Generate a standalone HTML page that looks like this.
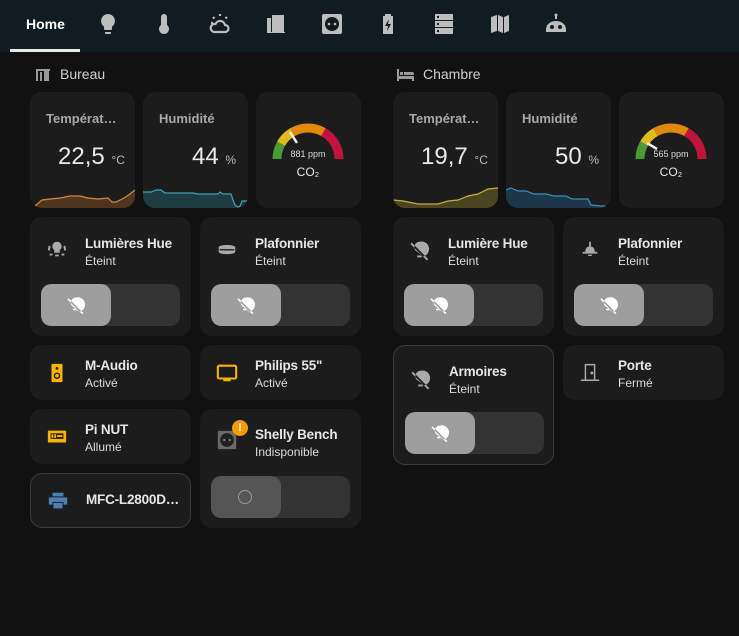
<!DOCTYPE html><html><head><meta charset="utf-8"><style>
*{box-sizing:border-box;margin:0;padding:0}
body{width:739px;height:636px;background:#111;font-family:"Liberation Sans",sans-serif;position:relative;overflow:hidden;color:#e1e1e1}
.hdr{position:absolute;left:0;top:0;width:739px;height:52px;background:#111c22}
.tab{position:absolute;top:16px;left:26px;font-size:14px;font-weight:bold;color:#fff}
.ul{position:absolute;left:10px;top:49px;width:70px;height:3px;background:#e8e8e8}
.ic{position:absolute;top:12px;width:24px;height:24px}
.card{position:absolute;background:#1c1c1c;border-radius:12px;overflow:hidden}
.bd{border:1px solid #3a3a3a}
.sec{position:absolute;top:66px;font-size:14px;color:#cfcfcf}
.st{position:absolute;left:16px;top:19px;font-size:13px;font-weight:bold;color:#a8a8a8}
.sv{position:absolute;top:51px;font-size:24px;color:#e8e8e8}
.sv small{font-size:12px;color:#bbb}
.t1{position:absolute;left:55px;font-size:13.5px;font-weight:bold;color:#e6e6e6;letter-spacing:-0.2px}
.t2{position:absolute;left:55px;font-size:12px;color:#dcdcdc}
.tog{position:absolute;left:11px;width:139px;height:42px;background:#333;border-radius:10px;overflow:hidden}
.kn{position:absolute;left:0;top:0;width:70px;height:42px;background:#9e9e9e;border-radius:10px}
.kn svg{position:absolute;left:26px;top:12px}
.ti{position:absolute;left:16px;width:22px;height:22px}
</style></head><body>
<div class="hdr"></div>
<div class="tab">Home</div><div class="ul"></div>
<svg class="ic" style="left:96px" viewBox="0 0 24 24" fill="#bdbdbd"><path d="M12 2a7 7 0 0 0-4 12.7V17a1 1 0 0 0 1 1h6a1 1 0 0 0 1-1v-2.3A7 7 0 0 0 12 2zM9 20v1a1 1 0 0 0 1 1h4a1 1 0 0 0 1-1v-1z"/></svg>
<svg class="ic" style="left:152px" viewBox="0 0 24 24" fill="#bdbdbd"><path d="M15 13V5a3 3 0 0 0-6 0v8a5 5 0 1 0 6 0z"/></svg>
<svg class="ic" style="left:208px" viewBox="0 0 24 24" fill="none" stroke="#bdbdbd" stroke-width="2.2"><path d="M6 20h11a3.5 3.5 0 0 0 0-7 5 5 0 0 0-9.5-1A4 4 0 0 0 6 20zM12 2v2M5 5l1.5 1.5M19 5l-1.5 1.5M3 11h2"/></svg>
<svg class="ic" style="left:264px" viewBox="0 0 24 24" fill="#bdbdbd"><path d="M3 20V6h4v14zM8 20V3h12v17h1v1H3v-1zM12 11h2v2h-2z"/></svg>
<svg class="ic" style="left:320px" viewBox="0 0 24 24"><rect x="2" y="2" width="20" height="20" rx="2" fill="#bdbdbd"/><circle cx="12" cy="12" r="7" fill="#111c22"/><circle cx="9" cy="12" r="1.3" fill="#bdbdbd"/><circle cx="15" cy="12" r="1.3" fill="#bdbdbd"/></svg>
<svg class="ic" style="left:376px" viewBox="0 0 24 24" fill="#bdbdbd"><path d="M9 2h6v2h2v18H7V4h2z"/><path d="M13 7l-4 7h3l-1 5 4-7h-3z" fill="#111c22"/></svg>
<svg class="ic" style="left:432px" viewBox="0 0 24 24" fill="#bdbdbd"><path d="M3 2h18v6H3zM3 9h18v6H3zM3 16h18v6H3z"/><path d="M5 4h2v2H5zM5 11h2v2H5zM5 18h2v2H5z" fill="#111c22"/></svg>
<svg class="ic" style="left:488px" viewBox="0 0 24 24" fill="#bdbdbd"><path d="M3 5l6-2v16l-6 2zM10 3l5 2v16l-5-2zM16 5l5-2v16l-5 2z"/></svg>
<svg class="ic" style="left:544px" viewBox="0 0 24 24" fill="#bdbdbd"><circle cx="12" cy="3" r="1.5"/><path d="M11 4h2v3h-2zM2 17a10 8 0 0 1 20 0v3H2z"/><circle cx="8" cy="15" r="2" fill="#111c22"/><circle cx="16" cy="15" r="2" fill="#111c22"/></svg>

<svg style="position:absolute;left:36px;top:68px" width="14" height="13" viewBox="0 0 14 13" fill="#9a9a9a"><path d="M0 1h14v2H2v10H0zM8 3h5v10H8zM4 4h2v9H4z"/></svg>
<div class="sec" style="left:60px">Bureau</div>
<svg style="position:absolute;left:397px;top:68px" width="17" height="13" viewBox="0 0 17 13" fill="#9a9a9a"><path d="M0 1h2v7h15v5h-2v-2H2v2H0zM3 4h3v3H3zM7 4h8a2 2 0 0 1 2 2v1H7z"/></svg>
<div class="sec" style="left:423px">Chambre</div>

<div class="card" style="left:30px;top:92px;width:105px;height:116px"><div class="st">Températ…</div><div class="sv" style="left:28px">22,5 <small>°C</small></div>
<svg style="position:absolute;left:0;bottom:0" width="105" height="22"><polygon points="0,22 0,20 5,20 12,14 20,13 30,12 40,10 50,10 58,12 68,13 78,12 82,16 86,16 94,12 100,8 105,4 105,22" fill="#4d3620"/><polyline points="0,20 5,20 12,14 20,13 30,12 40,10 50,10 58,12 68,13 78,12 82,16 86,16 94,12 100,8 105,4" fill="none" stroke="#d7873a" stroke-width="1.2"/></svg></div>
<div class="card" style="left:143px;top:92px;width:105px;height:116px"><div class="st">Humidité</div><div class="sv" style="left:49px">44 <small>%</small></div>
<svg style="position:absolute;left:0;bottom:0" width="105" height="22"><polygon points="0,22 0,6 8,6 13,4 18,4 22,7 50,7 55,8 75,8 77,6 80,8 88,8 90,14 92,19 95,21 97,20 99,15 105,15 105,22" fill="#1f3c42"/><polyline points="0,6 8,6 13,4 18,4 22,7 50,7 55,8 75,8 77,6 80,8 88,8 90,14 92,19 95,21 97,20 99,15 105,15" fill="none" stroke="#3fa2b8" stroke-width="1.2"/></svg></div>
<div class="card" style="left:256px;top:92px;width:105px;height:116px">
<svg width="105" height="116"><g fill="none" stroke-width="9"><path d="M21 67A31 31 0 0 1 25.15 51.5" stroke="#4a9a37"/><path d="M25.15 51.5A31 31 0 0 1 36.5 40.15" stroke="#e1bb1c"/><path d="M36.5 40.15A31 31 0 0 1 67.5 40.15" stroke="#e0890b"/><path d="M67.5 40.15A31 31 0 0 1 83 67" stroke="#c0143c"/></g><path d="M34 40L41 51" stroke="#eee" stroke-width="2.5"/><text x="52" y="65" font-size="9" fill="#ddd" text-anchor="middle">881 ppm</text><text x="52" y="84" font-size="12" fill="#e8e8e8" text-anchor="middle">CO₂</text></svg></div>

<div class="card" style="left:393px;top:92px;width:105px;height:116px"><div class="st">Températ…</div><div class="sv" style="left:28px">19,7 <small>°C</small></div>
<svg style="position:absolute;left:0;bottom:0" width="105" height="22"><polygon points="0,22 0,14 10,15 25,18 45,18 55,15 65,14 75,10 85,8 95,3 105,2 105,22" fill="#4a4420"/><polyline points="0,14 10,15 25,18 45,18 55,15 65,14 75,10 85,8 95,3 105,2" fill="none" stroke="#c9b136" stroke-width="1.2"/></svg></div>
<div class="card" style="left:506px;top:92px;width:105px;height:116px"><div class="st">Humidité</div><div class="sv" style="left:49px">50 <small>%</small></div>
<svg style="position:absolute;left:0;bottom:0" width="105" height="22"><polygon points="0,22 0,4 5,2 12,5 20,5 28,8 40,8 48,10 60,10 66,13 75,13 82,13 85,19 95,20 105,20 105,22" fill="#1e3748"/><polyline points="0,4 5,2 12,5 20,5 28,8 40,8 48,10 60,10 66,13 75,13 82,13 85,19 95,20 100,20" fill="none" stroke="#3a8fc0" stroke-width="1.2"/></svg></div>
<div class="card" style="left:619px;top:92px;width:105px;height:116px">
<svg width="105" height="116"><g fill="none" stroke-width="9"><path d="M21 67A31 31 0 0 1 25.15 51.5" stroke="#4a9a37"/><path d="M25.15 51.5A31 31 0 0 1 36.5 40.15" stroke="#e1bb1c"/><path d="M36.5 40.15A31 31 0 0 1 67.5 40.15" stroke="#e0890b"/><path d="M67.5 40.15A31 31 0 0 1 83 67" stroke="#c0143c"/></g><path d="M28 51L38 57" stroke="#eee" stroke-width="2.5"/><text x="52" y="65" font-size="9" fill="#ddd" text-anchor="middle">565 ppm</text><text x="52" y="84" font-size="12" fill="#e8e8e8" text-anchor="middle">CO₂</text></svg></div>

<div class="card" style="left:30px;top:217px;width:161px;height:119px">
<svg class="ti" style="top:22px" viewBox="0 0 24 24" fill="#aaa"><path d="M12 3a5 5 0 0 0-3 9v3h6v-3a5 5 0 0 0-3-9zM10 17h4v2h-4zM3 7l2 1-1 5-2-1zM21 7l-2 1 1 5 2-1zM4 16h3v2H4zM17 16h3v2h-3z"/></svg>
<div class="t1" style="top:19px">Lumières Hue</div><div class="t2" style="top:37px">Éteint</div>
<div class="tog" style="top:67px"><div class="kn"><svg width="18" height="18" viewBox="0 0 24 24" fill="#fff"><path d="M12 2a7 7 0 0 0-6 10.5L16.5 21A7 7 0 0 0 12 2zM8 17h6v2H8zM2 3l20 20-1.5 1.5L.5 4.5z"/></svg></div></div></div>
<div class="card" style="left:200px;top:217px;width:161px;height:119px">
<svg class="ti" style="top:22px" viewBox="0 0 24 24"><ellipse cx="12" cy="9" rx="9" ry="2.5" fill="#aaa"/><rect x="3" y="9" width="18" height="5" fill="#aaa"/><ellipse cx="12" cy="14" rx="9" ry="2.5" fill="#aaa"/><rect x="4" y="11" width="16" height="1.5" fill="#1c1c1c"/></svg>
<div class="t1" style="top:19px">Plafonnier</div><div class="t2" style="top:37px">Éteint</div>
<div class="tog" style="top:67px"><div class="kn"><svg width="18" height="18" viewBox="0 0 24 24" fill="#fff"><path d="M12 2a7 7 0 0 0-6 10.5L16.5 21A7 7 0 0 0 12 2zM8 17h6v2H8zM2 3l20 20-1.5 1.5L.5 4.5z"/></svg></div></div></div>

<div class="card" style="left:30px;top:345px;width:161px;height:55px">
<svg class="ti" style="top:17px" viewBox="0 0 24 24"><rect x="6" y="2" width="12" height="20" rx="1" fill="#f7b500"/><circle cx="12" cy="15" r="3.5" fill="#1c1c1c"/><circle cx="12" cy="15" r="2" fill="#f7b500"/><circle cx="12" cy="7" r="1.5" fill="#1c1c1c"/></svg>
<div class="t1" style="top:13px">M-Audio</div><div class="t2" style="top:31px">Activé</div></div>
<div class="card" style="left:200px;top:345px;width:161px;height:55px">
<svg class="ti" style="top:17px" viewBox="0 0 24 24"><rect x="2" y="4" width="20" height="14" rx="1.5" fill="none" stroke="#f7b500" stroke-width="2.3"/><rect x="8" y="19" width="8" height="2" fill="#f7b500"/></svg>
<div class="t1" style="top:13px">Philips 55"</div><div class="t2" style="top:31px">Activé</div></div>

<div class="card" style="left:30px;top:409px;width:161px;height:55px">
<svg class="ti" style="top:17px" viewBox="0 0 24 24"><rect x="2" y="5" width="20" height="13" rx="1" fill="#f7b500"/><rect x="5" y="8" width="14" height="6" fill="#1c1c1c"/><path d="M6 9h2v4H6zM9 9h2v4H9zM12 10h6v2h-6z" fill="#f7b500"/></svg>
<div class="t1" style="top:13px">Pi NUT</div><div class="t2" style="top:31px">Allumé</div></div>
<div class="card bd" style="left:30px;top:473px;width:161px;height:55px">
<svg class="ti" style="top:16px" viewBox="0 0 24 24" fill="#4a80b4"><path d="M6 3h12v4H6zM3 8h18a1 1 0 0 1 1 1v7h-4v-3H6v3H2V9a1 1 0 0 1 1-1zM7 14h10v6H7z"/></svg>
<div class="t1" style="top:18px">MFC-L2800D…</div></div>

<div class="card" style="left:200px;top:409px;width:161px;height:119px">
<svg class="ti" style="top:20px" viewBox="0 0 24 24"><rect x="2" y="2" width="20" height="20" rx="1" fill="#6a6a6a"/><circle cx="12" cy="12" r="7.5" fill="#222"/><circle cx="9" cy="12" r="1.2" fill="#888"/><circle cx="15" cy="12" r="1.2" fill="#888"/></svg>
<div style="position:absolute;left:32px;top:11px;width:16px;height:16px;border-radius:50%;background:#f59a0b;color:#fff;font-size:11px;font-weight:bold;text-align:center;line-height:16px">!</div>
<div class="t1" style="top:18px">Shelly Bench</div><div class="t2" style="top:36px">Indisponible</div>
<div class="tog" style="top:67px"><div class="kn" style="background:#555"><div style="position:absolute;left:27px;top:14px;width:14px;height:14px;border:1.5px solid #999;border-radius:50%"></div></div></div></div>

<div class="card" style="left:393px;top:217px;width:161px;height:119px">
<svg class="ti" style="top:22px" viewBox="0 0 24 24" fill="#aaa"><path d="M12 3a6 6 0 0 0-5 9.5L15.5 19A6 6 0 0 0 12 3zM9 18h5v2H9zM3 4l18 18-1.4 1.4L1.6 5.4z"/></svg>
<div class="t1" style="top:19px">Lumière Hue</div><div class="t2" style="top:37px">Éteint</div>
<div class="tog" style="top:67px"><div class="kn"><svg width="18" height="18" viewBox="0 0 24 24" fill="#fff"><path d="M12 2a7 7 0 0 0-6 10.5L16.5 21A7 7 0 0 0 12 2zM8 17h6v2H8zM2 3l20 20-1.5 1.5L.5 4.5z"/></svg></div></div></div>
<div class="card" style="left:563px;top:217px;width:161px;height:119px">
<svg class="ti" style="top:22px" viewBox="0 0 24 24" fill="#aaa"><path d="M11 3h2v5h-2zM12 8a5 5 0 0 1 5 6h3v2H4v-2h3a5 5 0 0 1 5-6zM10 17h4v1.5h-4z"/></svg>
<div class="t1" style="top:19px">Plafonnier</div><div class="t2" style="top:37px">Éteint</div>
<div class="tog" style="top:67px"><div class="kn"><svg width="18" height="18" viewBox="0 0 24 24" fill="#fff"><path d="M12 2a7 7 0 0 0-6 10.5L16.5 21A7 7 0 0 0 12 2zM8 17h6v2H8zM2 3l20 20-1.5 1.5L.5 4.5z"/></svg></div></div></div>
<div class="card bd" style="left:393px;top:345px;width:161px;height:120px">
<svg class="ti" style="top:22px" viewBox="0 0 24 24" fill="#aaa"><path d="M12 3a6 6 0 0 0-5 9.5L15.5 19A6 6 0 0 0 12 3zM9 18h5v2H9zM3 4l18 18-1.4 1.4L1.6 5.4z"/></svg>
<div class="t1" style="top:18px">Armoires</div><div class="t2" style="top:36px">Éteint</div>
<div class="tog" style="top:66px"><div class="kn"><svg width="18" height="18" viewBox="0 0 24 24" fill="#fff"><path d="M12 2a7 7 0 0 0-6 10.5L16.5 21A7 7 0 0 0 12 2zM8 17h6v2H8zM2 3l20 20-1.5 1.5L.5 4.5z"/></svg></div></div></div>
<div class="card" style="left:563px;top:345px;width:161px;height:55px">
<svg class="ti" style="top:16px" viewBox="0 0 24 24" fill="none" stroke="#aaa" stroke-width="1.6"><path d="M2 21h20M7 21V4h10v17"/><circle cx="14" cy="13" r="0.8" fill="#aaa"/></svg>
<div class="t1" style="top:13px">Porte</div><div class="t2" style="top:31px">Fermé</div></div>
</body></html>
